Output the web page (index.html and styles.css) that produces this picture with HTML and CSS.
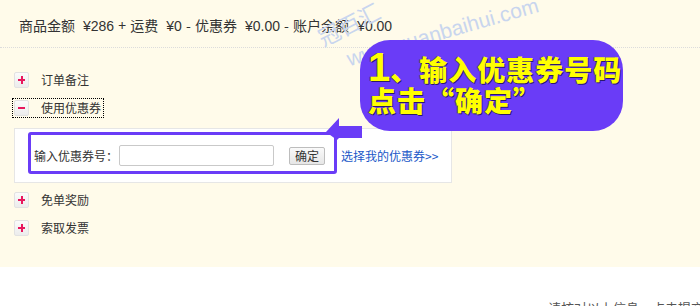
FILE: index.html
```html
<!DOCTYPE html>
<html lang="zh-CN">
<head>
<meta charset="utf-8">
<title>订单确认</title>
<link rel="stylesheet" href="styles.css">
</head>
<body>
<div class="page">
  <div class="panel">
    <div class="summary">商品金额<span class="amt">¥286</span> + 运费<span class="amt">¥0</span> - 优惠券<span class="amt">¥0.00</span> - 账户余额<span class="amt">¥0.00</span></div>
    <ul class="opts">
      <li class="opt"><span class="tog plus"></span><span class="opt-text">订单备注</span></li>
      <li class="opt"><span class="focus"><span class="tog minus"></span><span class="opt-text">使用优惠券</span></span></li>
      <li class="coupon-box">
        <label class="coupon-label">输入优惠券号：</label>
        <input class="coupon-input" type="text">
        <button class="coupon-btn">确定</button>
        <a class="coupon-link" href="#">选择我的优惠券&gt;&gt;</a>
      </li>
      <li class="opt opt-after"><span class="tog plus"></span><span class="opt-text">免单奖励</span></li>
      <li class="opt"><span class="tog plus"></span><span class="opt-text">索取发票</span></li>
    </ul>
  </div>
  <div class="footer">请核对以上信息，点击提交订单</div>

  <div class="watermark">
    <span class="wm-cn">冠百汇</span>
    <span class="wm-url">www.guanbaihui.com</span>
  </div>
  <div class="mark-rect"></div>
  <svg class="mark-arrow" width="40" height="26" viewBox="0 0 40 26">
    <polygon points="14,0 14,8 37,8 37,20 14,20 12,22 1,14" fill="#6a3cf7"/>
  </svg>
  <div class="callout">
    <div class="callout-line"><span class="big-one">1</span>、输入优惠券号码</div>
    <div class="callout-line">点击“确定”</div>
  </div>
</div>
</body>
</html>
```
FILE: styles.css
```css
html, body {
  margin: 0;
  padding: 0;
  background: #fff;
  overflow: hidden;
}
.page {
  position: relative;
  width: 700px;
  height: 306px;
  overflow: hidden;
  font-family: "Liberation Sans", "Noto Sans CJK SC", sans-serif;
  color: #333;
}
.panel {
  background: #fffbea;
  height: 267px;
}
.summary {
  padding: 17px 19px 12px;
  font-size: 14px;
  line-height: 17px;
  color: #333;
  font-family: "Noto Sans CJK SC", sans-serif;
  word-spacing: 1px;
  border-bottom: 1px dotted #dcdcdc;
}
.amt {
  margin-left: 8px;
  font-family: "Liberation Sans", sans-serif;
}
.opts {
  list-style: none;
  margin: 0;
  padding: 18px 0 0 14px;
}
.opt {
  height: 28px;
  display: flex;
  align-items: center;
  font-size: 12px;
  font-family: "Noto Sans CJK SC", sans-serif;
  color: #333;
}
.opt-after {
  margin-top: 3px;
}
.focus {
  display: flex;
  align-items: center;
  outline: 1px dotted #000;
  outline-offset: 1px;
  padding-right: 1px;
}
.tog {
  width: 13px;
  height: 14px;
  border: 1px solid #e2e2e2;
  border-radius: 2px;
  background: linear-gradient(#fbfbfb, #ececec);
  position: relative;
  margin-right: 12px;
  flex: none;
}
.tog::before {
  content: "";
  position: absolute;
  left: 3px;
  top: 6px;
  width: 7px;
  height: 2px;
  background: #e8175d;
}
.plus::after {
  content: "";
  position: absolute;
  left: 6px;
  top: 3px;
  width: 2px;
  height: 8px;
  background: #e8175d;
}
.opt-text {
  line-height: 16px;
}
.coupon-box {
  margin: 6px 0 0 0;
  height: 53px;
  background: #fff;
  border: 1px solid #e6e6e6;
  display: flex;
  align-items: center;
  padding-left: 19px;
  box-sizing: content-box;
  width: 417px;
  font-size: 12px;
  font-family: "Noto Sans CJK SC", sans-serif;
}
.coupon-label {
  color: #333;
  width: 85px;
}
.coupon-input {
  width: 151px;
  height: 17px;
  margin: 0;
  padding: 1px;
  border: 1px solid #c9c9c9;
  border-radius: 2px;
  background: #fff;
}
.coupon-btn {
  margin-left: 15px;
  width: 36px;
  height: 18px;
  padding: 0;
  font-size: 12px;
  line-height: 16px;
  font-family: "Noto Sans CJK SC", sans-serif;
  color: #333;
  border: 1px solid #bdbdbd;
  border-radius: 2px;
  background: linear-gradient(#fafafa, #e6e6e6);
}
.coupon-link {
  margin-left: 16px;
  color: #2057c8;
  text-decoration: none;
}
.footer {
  padding: 31px 0 0 548px;
  font-size: 13px;
  line-height: 20px;
  color: #555;
  white-space: nowrap;
  font-family: "Noto Sans CJK SC", sans-serif;
}
.watermark {
  position: absolute;
  left: 330px;
  top: -10px;
  width: 240px;
  height: 80px;
  color: #c8d5ee;
  font-family: "Liberation Sans", "Noto Sans CJK SC", sans-serif;
  pointer-events: none;
}
.wm-cn {
  position: absolute;
  left: -6px;
  top: 36px;
  font-size: 22px;
  line-height: 22px;
  white-space: nowrap;
  font-family: "Noto Sans CJK SC", sans-serif;
  transform: rotate(-27deg);
  transform-origin: left bottom;
}
.wm-url {
  position: absolute;
  left: 14px;
  top: 58px;
  font-size: 21px;
  white-space: nowrap;
  transform: rotate(-16deg);
  transform-origin: left top;
}
.mark-rect {
  position: absolute;
  left: 28px;
  top: 132px;
  width: 303px;
  height: 36px;
  border: 3px solid #6a3cf7;
  border-radius: 3px;
}
.mark-arrow {
  position: absolute;
  left: 325px;
  top: 118px;
}
.callout {
  position: absolute;
  left: 360px;
  top: 40px;
  width: 263px;
  height: 91px;
  border-radius: 30px;
  background: #6a3cf7;
  padding: 12px 0 0 8px;
  box-sizing: border-box;
  color: #ffff00;
  font-family: "Noto Sans CJK SC", sans-serif;
  font-weight: 900;
  font-size: 28px;
  letter-spacing: 1px;
  text-shadow: 1px 1px 0 #2b1a6a, -1px 0 0 #4a2bb0;
}
.callout-line {
  line-height: 31px;
  white-space: nowrap;
}
.big-one {
  font-family: "Liberation Sans", sans-serif;
  font-size: 40px;
  font-weight: 700;
  letter-spacing: 0;
}
```
